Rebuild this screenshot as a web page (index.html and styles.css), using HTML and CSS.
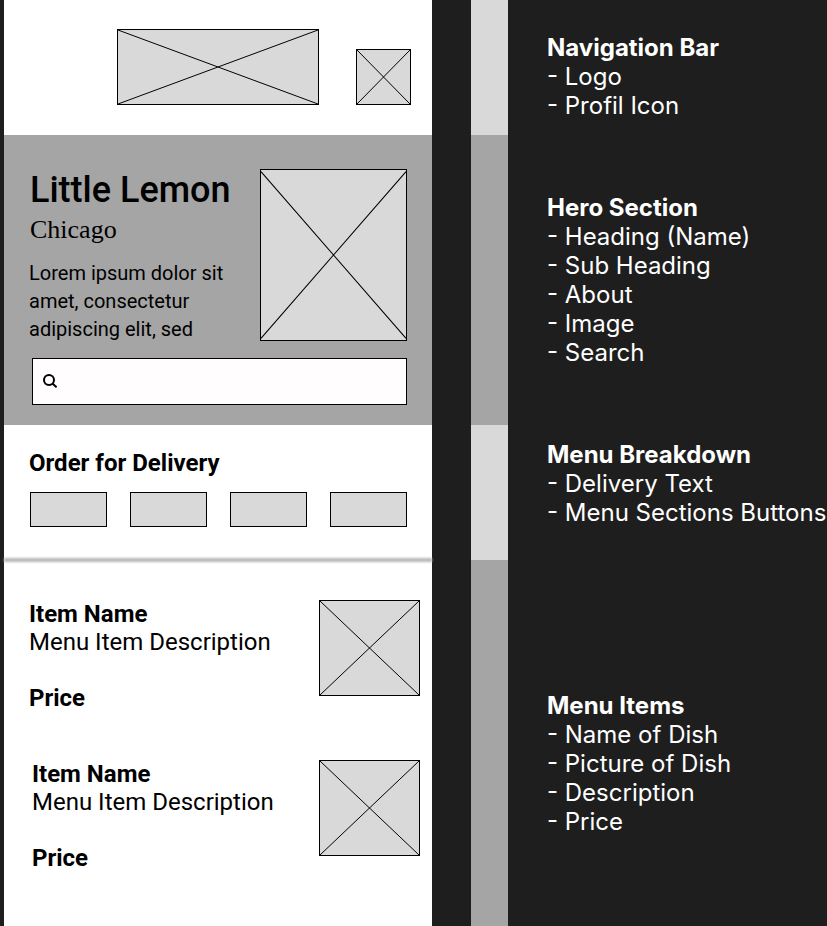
FILE: index.html
```html
<!DOCTYPE html>
<html lang="en">
<head>
<meta charset="utf-8">
<meta name="viewport" content="width=device-width, initial-scale=1">
<title>Little Lemon wireframe</title>
<link rel="stylesheet" href="styles.css">
</head>
<body>
<main class="board">
  <section class="band">
    <header class="screen nav">
      <svg class="placeholder logo" viewBox="0 0 100 100" preserveAspectRatio="none" role="img" aria-label="Logo"><path d="M0 0L100 100M100 0L0 100"/></svg>
      <svg class="placeholder profile" viewBox="0 0 100 100" preserveAspectRatio="none" role="img" aria-label="Profile"><path d="M0 0L100 100M100 0L0 100"/></svg>
    </header>
    <div class="strip strip-light"></div>
    <div class="notes notes-nav">
      <h2>Navigation Bar</h2>
      <ul><li>- Logo</li><li>- Profil Icon</li></ul>
    </div>
  </section>

  <section class="band">
    <div class="screen hero">
      <div class="hero-top">
        <div class="hero-text">
          <h1>Little Lemon</h1>
          <p class="city">Chicago</p>
          <p class="about">Lorem ipsum dolor sit amet, consectetur adipiscing elit, sed</p>
        </div>
        <svg class="placeholder hero-image" viewBox="0 0 100 100" preserveAspectRatio="none" role="img" aria-label="Restaurant"><path d="M0 1L100 99M100 1L0 99"/></svg>
      </div>
      <label class="search">
        <svg class="search-icon" viewBox="0 0 14 14" aria-hidden="true"><circle cx="6" cy="6" r="5"/><path d="M9.4 9.4L13.6 13.2"/></svg>
        <input type="search" aria-label="Search">
      </label>
    </div>
    <div class="strip strip-dark"></div>
    <div class="notes notes-hero">
      <h2>Hero Section</h2>
      <ul><li>- Heading (Name)</li><li>- Sub Heading</li><li>- About</li><li>- Image</li><li>- Search</li></ul>
    </div>
  </section>

  <section class="band">
    <div class="screen delivery">
      <h2>Order for Delivery</h2>
      <div class="categories">
        <button type="button" aria-label="Category 1"></button>
        <button type="button" aria-label="Category 2"></button>
        <button type="button" aria-label="Category 3"></button>
        <button type="button" aria-label="Category 4"></button>
      </div>
    </div>
    <div class="strip strip-light"></div>
    <div class="notes notes-menu">
      <h2>Menu Breakdown</h2>
      <ul><li>- Delivery Text</li><li>- Menu Sections Buttons</li></ul>
    </div>
  </section>

  <section class="band band-last">
    <div class="screen items">
      <article class="item">
        <div>
          <h3>Item Name</h3>
          <p>Menu Item Description</p>
          <p class="price">Price</p>
        </div>
        <svg class="placeholder dish" viewBox="0 0 100 100" preserveAspectRatio="none" role="img" aria-label="Dish"><path d="M0 0L100 100M100 0L0 100"/></svg>
      </article>
      <article class="item item-inset">
        <div>
          <h3>Item Name</h3>
          <p>Menu Item Description</p>
          <p class="price">Price</p>
        </div>
        <svg class="placeholder dish" viewBox="0 0 100 100" preserveAspectRatio="none" role="img" aria-label="Dish"><path d="M0 0L100 100M100 0L0 100"/></svg>
      </article>
    </div>
    <div class="strip strip-dark"></div>
    <div class="notes notes-items">
      <h2>Menu Items</h2>
      <ul><li>- Name of Dish</li><li>- Picture of Dish</li><li>- Description</li><li>- Price</li></ul>
    </div>
  </section>
</main>
</body>
</html>
```
FILE: styles.css
```css
* {
  box-sizing: border-box;
}

body {
  margin: 0;
  background: #1e1e1e;
  color: #000;
  font-family: Roboto, sans-serif;
}

h1, h2, h3, p, ul {
  margin: 0;
  padding: 0;
}

ul {
  list-style: none;
}

.board {
  display: flex;
  flex-direction: column;
  min-height: 100vh;
  padding-left: 4px;
  overflow-x: hidden;
}

.band {
  display: grid;
  grid-template-columns: minmax(0, 428fr) 37px minmax(0, 280fr);
  column-gap: 39px;
}

.band-last {
  flex: 1;
}

.screen {
  background: #fff;
}

.strip-light {
  background: #d9d9d9;
}

.strip-dark {
  background: #a5a5a5;
}

.placeholder {
  flex: none;
  border: 1px solid #000;
  background: #d9d9d9;
}

.placeholder path {
  stroke: #000;
  stroke-width: 1px;
  vector-effect: non-scaling-stroke;
}

/* Navigation */
.nav {
  display: flex;
  justify-content: flex-end;
  align-items: flex-end;
  gap: 37px;
  padding: 29px 21px 30px;
}

.logo {
  width: 202px;
  height: 76px;
}

.profile {
  width: 55px;
  height: 56px;
}

/* Hero */
.screen.hero {
  padding: 34px 25px 20px;
  background: #a5a5a5;
}

.hero-top {
  display: flex;
  justify-content: space-between;
}

.hero h1,
.city {
  padding-left: 1px;
}

.hero h1 {
  font-size: 36px;
  font-weight: 500;
  line-height: 42px;
  white-space: nowrap;
}

.city {
  margin: 4px 0 14px;
  font-family: "Liberation Serif", serif;
  font-size: 26px;
  line-height: 30px;
}

.about {
  margin-bottom: -2px;
  font-size: 20px;
  line-height: 28px;
}

.hero-text {
  flex: 0 1 210px;
}

.hero-image {
  width: 147px;
  height: 172px;
}

.search {
  display: flex;
  align-items: center;
  gap: 10px;
  height: 47px;
  margin: 17px 0 0 3px;
  padding: 0 10px 2px;
  border: 1px solid #000;
  background: #fffdfe;
}

.search-icon {
  flex: none;
  width: 14px;
  height: 14px;
  fill: none;
  stroke: #000;
  stroke-width: 2px;
}

.search input {
  flex: 1;
  min-width: 0;
  border: 0;
  outline: 0;
  background: transparent;
  font: inherit;
}

/* Delivery */
.delivery {
  padding: 24px 25px 33px;
}

.delivery h2 {
  font-size: 24px;
  font-weight: 700;
  line-height: 28px;
}

.categories {
  display: flex;
  justify-content: space-between;
  margin-top: 15px;
  padding-left: 1px;
}

.categories button {
  width: 77px;
  height: 35px;
  padding: 0;
  border: 1px solid #000;
  background: #d9d9d9;
}

/* Menu items */
.items {
  position: relative;
  padding: 40px 12px 40px 25px;
  font-size: 24px;
  line-height: 28px;
}

.items::before {
  content: "";
  position: absolute;
  top: -2px;
  left: 0;
  right: 0;
  height: 4px;
  background: #b8b8b8;
  filter: blur(1px);
}

.item {
  display: flex;
  justify-content: space-between;
  align-items: flex-start;
}

.item + .item {
  margin-top: 48px;
}

.item-inset {
  padding-left: 3px;
}

.item h3,
.price {
  font-size: 24px;
  font-weight: 700;
}

.price {
  margin-top: 28px;
}

.dish {
  width: 101px;
  height: 96px;
}

/* Annotations */
.notes {
  color: #fff;
  font-family: Inter, sans-serif;
  font-size: 24px;
  font-optical-sizing: none;
  line-height: 29px;
  white-space: nowrap;
}

.notes h2 {
  font-size: 24px;
  font-weight: 700;
}

.notes-nav {
  padding-top: 33px;
}

.notes-hero {
  padding-top: 58px;
}

.notes-menu {
  padding-top: 15px;
}

.notes-items {
  padding-top: 131px;
}
```
